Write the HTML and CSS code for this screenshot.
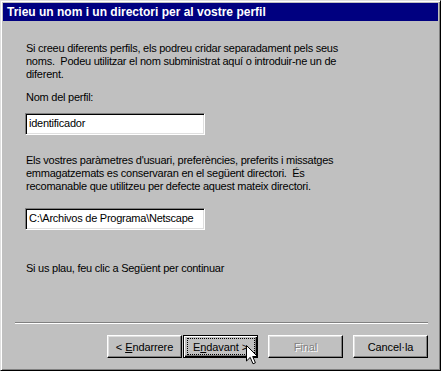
FILE: index.html
```html
<!DOCTYPE html>
<html lang="ca">
<head>
  <meta charset="UTF-8" />
  <title>Assistent de perfils</title>
  <link rel="stylesheet" href="styles.css">
</head>
<body>
  <div class="window">
    <div class="title-bar">Trieu un nom i un directori per al vostre perfil</div>

    <div class="content">
      <p class="para">
        Si creeu diferents perfils, els podreu cridar separadament pels seus<br>
        noms.&nbsp; Podeu utilitzar el nom subministrat aquí o introduir-ne un de<br>
        diferent.
      </p>

      <p class="label">Nom del perfil:</p>
      <div class="field">identificador</div>

      <p class="para para-dir">
        Els vostres paràmetres d'usuari, preferències, preferits i missatges<br>
        emmagatzemats es conservaran en el següent directori.&nbsp; És<br>
        recomanable que utilitzeu per defecte aquest mateix directori.
      </p>

      <div class="field field-dir">C:\Archivos de Programa\Netscape</div>

      <p class="para para-next">Si us plau, feu clic a Següent per continuar</p>
    </div>

    <div class="footer">
      <div class="separator"></div>
      <div class="buttons">
        <button class="btn btn-back"><span>&lt;&nbsp;<u>E</u>ndarrere</span></button>
        <button class="btn btn-default"><span class="focus">E<u>n</u>davant&nbsp;&gt;</span></button>
        <button class="btn btn-disabled">Final</button>
        <button class="btn">Cancel·la</button>
      </div>
    </div>

    <!-- mouse pointer over the Next button -->
    <svg class="cursor" width="13" height="20" viewBox="0 0 13 20">
      <path d="M0.5 0.5 L0.5 16 L4.2 12.4 L7 18.8 L9.4 17.8 L6.7 11.5 L11.5 11.5 Z" fill="#fff" stroke="#000" stroke-width="1"/>
    </svg>
  </div>
</body>
</html>
```

FILE: styles.css
```css
html, body {
  margin: 0;
  padding: 0;
  background: #c0c0c0;
}

.window {
  position: relative;
  width: 441px;
  height: 371px;
  box-sizing: border-box;
  background: #c0c0c0;
  border: 1px solid;
  border-color: #dfdfdf #000 #000 #dfdfdf;
  box-shadow: inset 1px 1px #fff, inset -1px -1px #808080;
  padding: 2px;
  font-family: "Liberation Sans", Arial, sans-serif;
  font-size: 11px;
  letter-spacing: -0.25px;
  color: #000;
  display: flex;
  flex-direction: column;
}

.title-bar {
  height: 18px;
  line-height: 18px;
  background: #000080;
  color: #fff;
  font-weight: bold;
  font-size: 12px;
  letter-spacing: 0;
  padding-left: 4px;
  white-space: nowrap;
}

.content {
  padding: 21px 0 0 23px;
  flex: 1;
}

.content p {
  margin: 0;
  line-height: 13px;
  white-space: nowrap;
}

.label {
  margin-top: 10px !important;
}

.field {
  width: 180px;
  height: 22px;
  box-sizing: border-box;
  margin-top: 9px;
  margin-left: -1px;
  background: #fff;
  border: 1px solid;
  border-color: #808080 #fff #fff #808080;
  box-shadow: inset 1px 1px #000, inset -1px -1px #dfdfdf;
  padding: 0 0 0 3px;
  line-height: 19px;
  font-size: 11px;
  white-space: nowrap;
}

.para-dir {
  margin-top: 19px !important;
}

.field-dir {
  margin-top: 15px;
}

.para-next {
  margin-top: 32px !important;
}

.footer {
  padding: 0 10px 10px 12px;
}

.separator {
  height: 0;
  border-top: 1px solid #808080;
  border-bottom: 1px solid #fff;
  margin-bottom: 11px;
}

.buttons {
  display: flex;
  justify-content: flex-end;
  gap: 10px;
}

.btn {
  width: 75px;
  height: 23px;
  box-sizing: border-box;
  background: #c0c0c0;
  border: 1px solid;
  border-color: #fff #000 #000 #fff;
  box-shadow: inset -1px -1px #808080, inset 1px 1px #dfdfdf;
  font-family: "Liberation Sans", Arial, sans-serif;
  font-size: 11px;
  letter-spacing: -0.1px;
  color: #000;
  padding: 0;
  display: flex;
  align-items: center;
  justify-content: center;
}

.btn-back {
  margin-right: -9px;
}

.btn-default {
  border: 1px solid #000;
  box-shadow: inset 1px 1px #fff, inset -1px -1px #000, inset -2px -2px #808080;
}

.btn-default .focus {
  display: flex;
  align-items: center;
  justify-content: center;
  width: 66px;
  height: 15px;
  outline: 1px dotted #000;
}

.btn-disabled {
  color: #808080;
  text-shadow: 1px 1px #fff;
}

.btn u {
  text-underline-offset: 1px;
}

.cursor {
  position: absolute;
  left: 245px;
  top: 344px;
}
```
